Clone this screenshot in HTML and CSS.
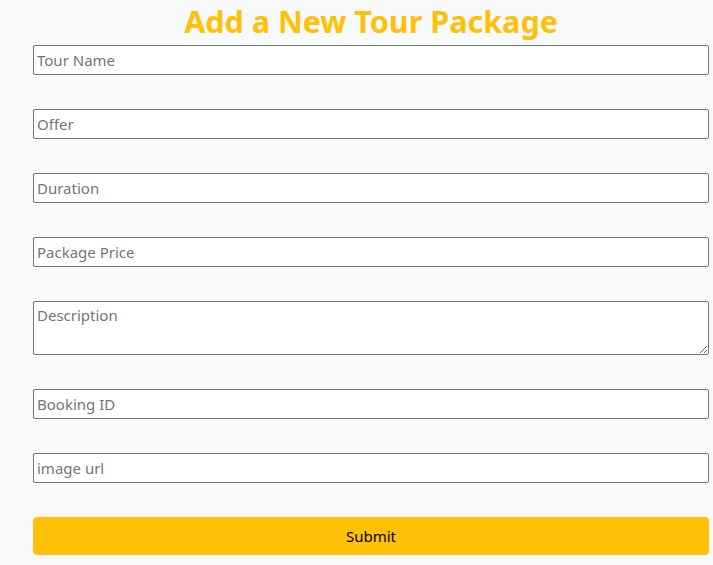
FILE: index.html
```html
<!DOCTYPE html>
<html>
<head>
<meta charset="utf-8">
<link rel="stylesheet" href="styles.css">
</head>
<body>
<div class="container">
  <h1 class="title">Add a New Tour Package</h1>
  <form class="form">
    <input class="field" type="text" placeholder="Tour Name">
    <input class="field" type="text" placeholder="Offer">
    <input class="field" type="text" placeholder="Duration">
    <input class="field" type="text" placeholder="Package Price">
    <textarea class="field area" placeholder="Description"></textarea>
    <input class="field" type="text" placeholder="Booking ID">
    <input class="field" type="text" placeholder="image url">
    <button class="submit" type="button">Submit</button>
  </form>
</div>
</body>
</html>
```
FILE: styles.css
```css
html, body {
  margin: 0;
  padding: 0;
  background: #f8f9fa;
}
body {
  font-family: "Noto Sans", "Open Sans", sans-serif;
}
.container {
  margin-left: 33px;
  width: 676px;
}
.title {
  margin: 0;
  padding-top: 1px;
  height: 45px;
  line-height: 40px;
  font-size: 30.5px;
  font-weight: 700;
  color: #ffc107;
  text-align: center;
  box-sizing: border-box;
}
.form {
  display: flex;
  flex-direction: column;
  gap: 34px;
}
.field {
  box-sizing: border-box;
  width: 100%;
  height: 30px;
  margin: 0;
  padding: 0 3px;
  border: 1px solid #767676;
  border-radius: 2px;
  background: #fff;
  font-family: inherit;
  font-size: 15px;
  color: #212529;
}
.field::placeholder {
  color: #757575;
}
.area {
  height: 54px;
  padding-top: 3px;
  resize: both;
  display: block;
}
.submit {
  box-sizing: border-box;
  width: 100%;
  height: 38px;
  margin: 0;
  border: none;
  border-radius: 4px;
  background: #ffc107;
  color: #000;
  font-family: inherit;
  font-size: 15px;
  cursor: pointer;
}
```
